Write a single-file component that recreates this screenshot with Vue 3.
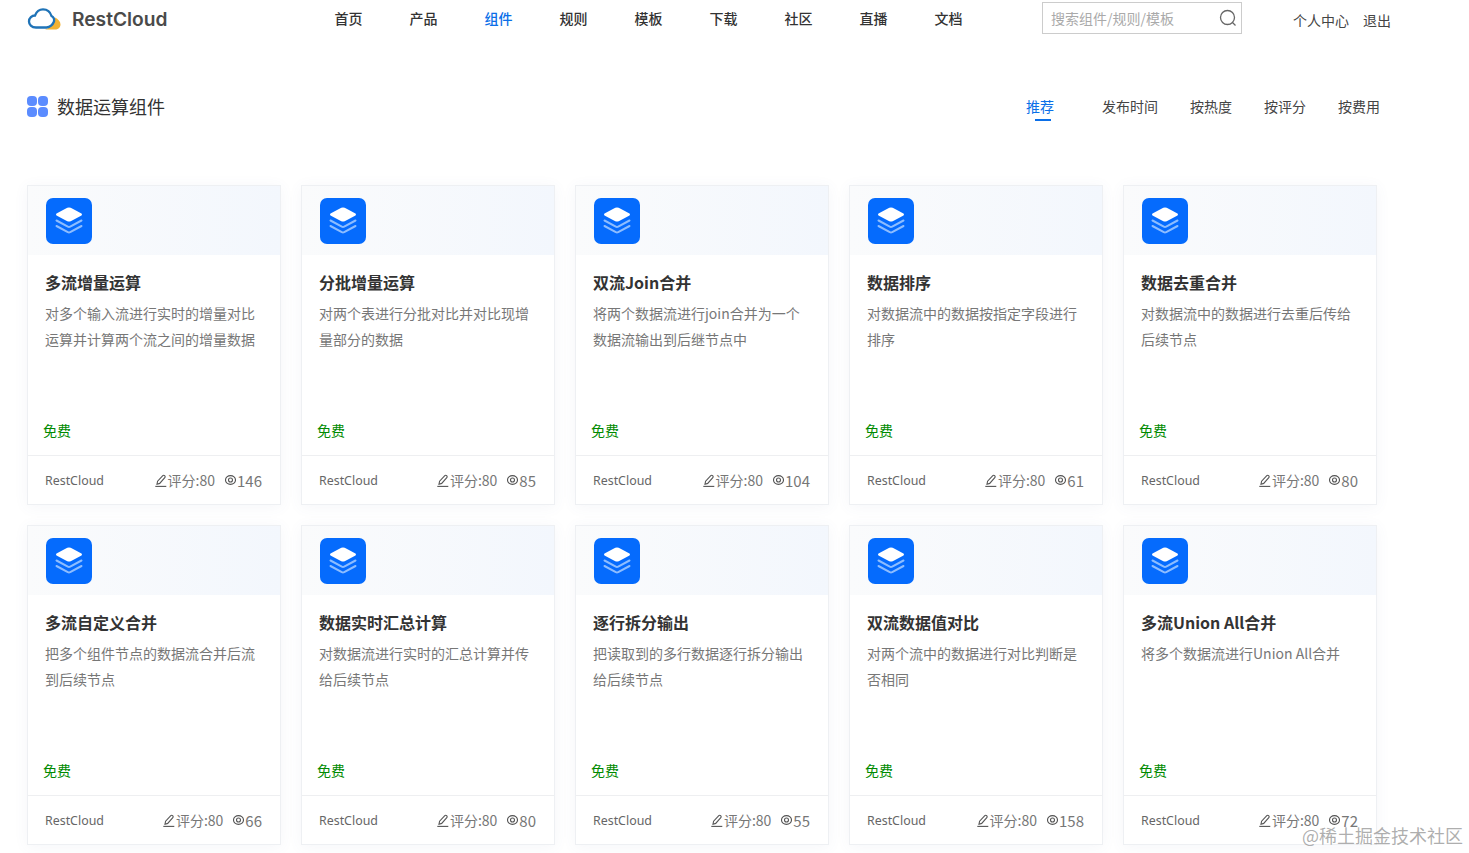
<script setup>
const navItems = ['首页', '产品', '组件', '规则', '模板', '下载', '社区', '直播', '文档']
const tabs = ['推荐', '发布时间', '按热度', '按评分', '按费用']

const cards = [
  { title: '多流增量运算', desc: '对多个输入流进行实时的增量对比运算并计算两个流之间的增量数据', views: 146 },
  { title: '分批增量运算', desc: '对两个表进行分批对比并对比现增量部分的数据', views: 85 },
  { title: '双流Join合并', desc: '将两个数据流进行join合并为一个数据流输出到后继节点中', views: 104 },
  { title: '数据排序', desc: '对数据流中的数据按指定字段进行排序', views: 61 },
  { title: '数据去重合并', desc: '对数据流中的数据进行去重后传给后续节点', views: 80 },
  { title: '多流自定义合并', desc: '把多个组件节点的数据流合并后流到后续节点', views: 66 },
  { title: '数据实时汇总计算', desc: '对数据流进行实时的汇总计算并传给后续节点', views: 80 },
  { title: '逐行拆分输出', desc: '把读取到的多行数据逐行拆分输出给后续节点', views: 55 },
  { title: '双流数据值对比', desc: '对两个流中的数据进行对比判断是否相同', views: 158 },
  { title: '多流Union All合并', desc: '将多个数据流进行Union All合并', views: 72 }
]
</script>

<template>
  <div class="page">
    <header class="topbar">
      <div class="brand">
        <svg class="brand-icon" width="34" height="22" viewBox="0 0 34 22">
          <path d="M18 21.500C24 19.500 27 16 28 9.500C31 11 33.500 13.500 33.500 16.500C33.500 19.500 31 21.500 28 21.500z" fill="#f2b233" />
          <path d="M9 19.500C4.500 19.500 2 16.500 2 13.500C2 10 5 7.500 8 7.500C9.500 3.500 12.500 1.300 16 1.300C21 1.300 23.500 4.500 24.500 8C26.500 9 27.500 11 27 13.500C26 16 23 19 19.500 19.500z" fill="#fff" stroke="#1f73b7" stroke-width="2.300" />
        </svg>
        <span class="brand-name">RestCloud</span>
      </div>
      <nav class="nav">
        <a v-for="item in navItems" :key="item" :class="['nav-item', { active: item === '组件' }]">{{ item }}</a>
      </nav>
      <div class="search">
        <span>搜索组件/规则/模板</span>
        <svg width="18" height="18" viewBox="0 0 18 18" fill="none" stroke="#666" stroke-width="1.300">
          <circle cx="8.500" cy="8.500" r="7" />
          <path d="M13.500 13.500l3 3" />
        </svg>
      </div>
      <div class="user-links">
        <a>个人中心</a>
        <a>退出</a>
      </div>
    </header>

    <section class="title-row">
      <div class="heading">
        <svg width="21" height="21" viewBox="0 0 21 21" fill="#5b8cff">
          <rect x="0" y="0" width="10" height="10" rx="4" />
          <rect x="11" y="0" width="10" height="10" rx="4" />
          <rect x="0" y="11" width="10" height="10" rx="4" />
          <rect x="11" y="11" width="10" height="10" rx="4" />
        </svg>
        <h1>数据运算组件</h1>
      </div>
      <div class="tabs">
        <a v-for="tab in tabs" :key="tab" :class="['tab', { active: tab === '推荐' }]">{{ tab }}</a>
      </div>
    </section>

    <section class="grid">
      <article v-for="card in cards" :key="card.title" class="card">
        <div class="card-top">
          <div class="card-icon">
            <svg width="46" height="46" viewBox="0 0 46 46" fill="none">
              <path d="M21.300 9.800a4 4 0 0 1 3.400 0l10.300 5.400c1.300.7 1.300 1.900 0 2.600l-10.300 5.400a4 4 0 0 1-3.400 0L11 17.800c-1.300-.7-1.300-1.900 0-2.600z" fill="#fff" />
              <path d="M10.500 22.500l11.300 6.100a2.500 2.500 0 0 0 2.400 0l11.300-6.100" stroke="#8dbdff" stroke-width="2" stroke-linecap="round" />
              <path d="M10.500 28l11.300 6.100a2.500 2.500 0 0 0 2.400 0L35.500 28" stroke="#8dbdff" stroke-width="2" stroke-linecap="round" />
            </svg>
          </div>
        </div>
        <div class="card-body">
          <h3>{{ card.title }}</h3>
          <p>{{ card.desc }}</p>
          <span class="price">免费</span>
        </div>
        <footer class="card-foot">
          <span class="author">RestCloud</span>
          <span class="meta">
            <span class="meta-part">
              <svg width="12" height="13" viewBox="0 0 12 13" fill="none" stroke="#555" stroke-width="1.100">
                <path d="M2 10.200l.6-3 5.200-5.600a1.200 1.200 0 0 1 1.700 0l.3.300a1.200 1.200 0 0 1 0 1.700L4.700 9.400z" />
                <path d="M.3 12.400h11" />
              </svg>评分:80
            </span>
            <span class="meta-part">
              <svg width="11" height="10" viewBox="0 0 11 10" fill="none" stroke="#555" stroke-width="1.100">
                <ellipse cx="5.500" cy="5" rx="5" ry="4.400" />
                <circle cx="5.500" cy="5" r="2" />
              </svg><span class="views">{{ card.views }}</span>
            </span>
          </span>
        </footer>
      </article>
    </section>

    <div class="watermark">@稀土掘金技术社区</div>
  </div>
</template>

<style>
html, body { margin: 0; background: #fff; overflow: hidden; }
</style>

<style scoped>
.page {
  position: relative;
  height: 853px;
  overflow: hidden;
  box-sizing: border-box;
  padding-left: 27px;
  font-family: "Noto Sans CJK SC", "Noto Sans", sans-serif;
  color: #333;
  background: #fff;
}

.topbar { display: flex; align-items: flex-start; height: 38px; }
.brand { display: flex; align-items: center; width: 284px; height: 38px; }
.brand-icon { margin-right: 11px; }
.brand-name {
  font-family: Inter, "Noto Sans", sans-serif;
  font-size: 19.200px;
  font-weight: 600;
  color: #4a4a4a;
}
.nav { display: flex; width: 731px; padding-top: 8px; }
.nav-item { width: 75px; font-size: 14px; font-weight: 500; line-height: 20px; text-align: center; color: #333; }
.nav-item.active { color: #0b6fe8; }
.search {
  display: flex;
  align-items: center;
  justify-content: space-between;
  box-sizing: border-box;
  width: 200px;
  height: 32px;
  margin-top: 2px;
  padding: 0 4px 0 8px;
  border: 1px solid #ccc;
  font-size: 14px;
  color: #aaa;
}
.user-links { display: flex; gap: 14px; padding: 10px 0 0 51px; font-size: 14px; line-height: 20px; color: #444; }

.title-row {
  display: flex;
  justify-content: space-between;
  align-items: center;
  width: 1353px;
  height: 40px;
  margin-top: 48px;
}
.heading { display: flex; align-items: center; gap: 9px; }
.heading h1 { margin: 0; font-size: 18px; font-weight: 400; line-height: 26px; color: #333; }
.tabs { display: flex; gap: 32px; }
.tab { position: relative; font-size: 14px; line-height: 20px; color: #444; }
.tab.active { margin-right: 16px; color: #0b6fe8; }
.tab.active::after {
  content: "";
  position: absolute;
  left: 9px;
  bottom: -5px;
  width: 16px;
  height: 2px;
  background: #0b6fe8;
}

.grid {
  display: grid;
  grid-template-columns: repeat(5, 254px);
  grid-auto-rows: 320px;
  gap: 20px;
  margin-top: 59px;
}
.card {
  display: flex;
  flex-direction: column;
  box-sizing: border-box;
  border: 1px solid #eef0f3;
  background: #fff;
  box-shadow: 0 2px 14px rgba(90, 110, 150, 0.06);
}
.card-top {
  flex: none;
  box-sizing: border-box;
  height: 69px;
  padding: 12px 0 0 18px;
  background: linear-gradient(90deg, #fafbfc, #f3f7fd);
}
.card-icon { width: 46px; height: 46px; border-radius: 7px; background: #056bfd; }
.card-icon svg { display: block; }
.card-body {
  flex: 1;
  display: flex;
  flex-direction: column;
  padding: 15px 17px 15px;
}
.card-body h3 { margin: 0; font-size: 16px; font-weight: 700; line-height: 24px; color: #333; }
.card-body p { margin: 6px 0 0; font-size: 14px; line-height: 26px; color: #777; }
.price { margin: auto 0 0 -2px; font-size: 14px; font-weight: 400; line-height: 20px; color: #008a00; }
.card-foot {
  flex: none;
  display: flex;
  justify-content: space-between;
  align-items: center;
  box-sizing: border-box;
  height: 49px;
  padding: 0 18px 0 17px;
  border-top: 1px solid #eeeff1;
  font-size: 14px;
  color: #777;
}
.author { font-family: "Noto Sans", sans-serif; font-size: 12.400px; color: #666; }
.meta { display: flex; gap: 10px; }
.meta-part { display: flex; align-items: center; gap: 1px; }
.views { font-size: 15px; }

.watermark {
  position: absolute;
  right: 6px;
  bottom: 7px;
  font-size: 18px;
  line-height: 22px;
  color: rgba(120, 120, 120, 0.6);
}
</style>
